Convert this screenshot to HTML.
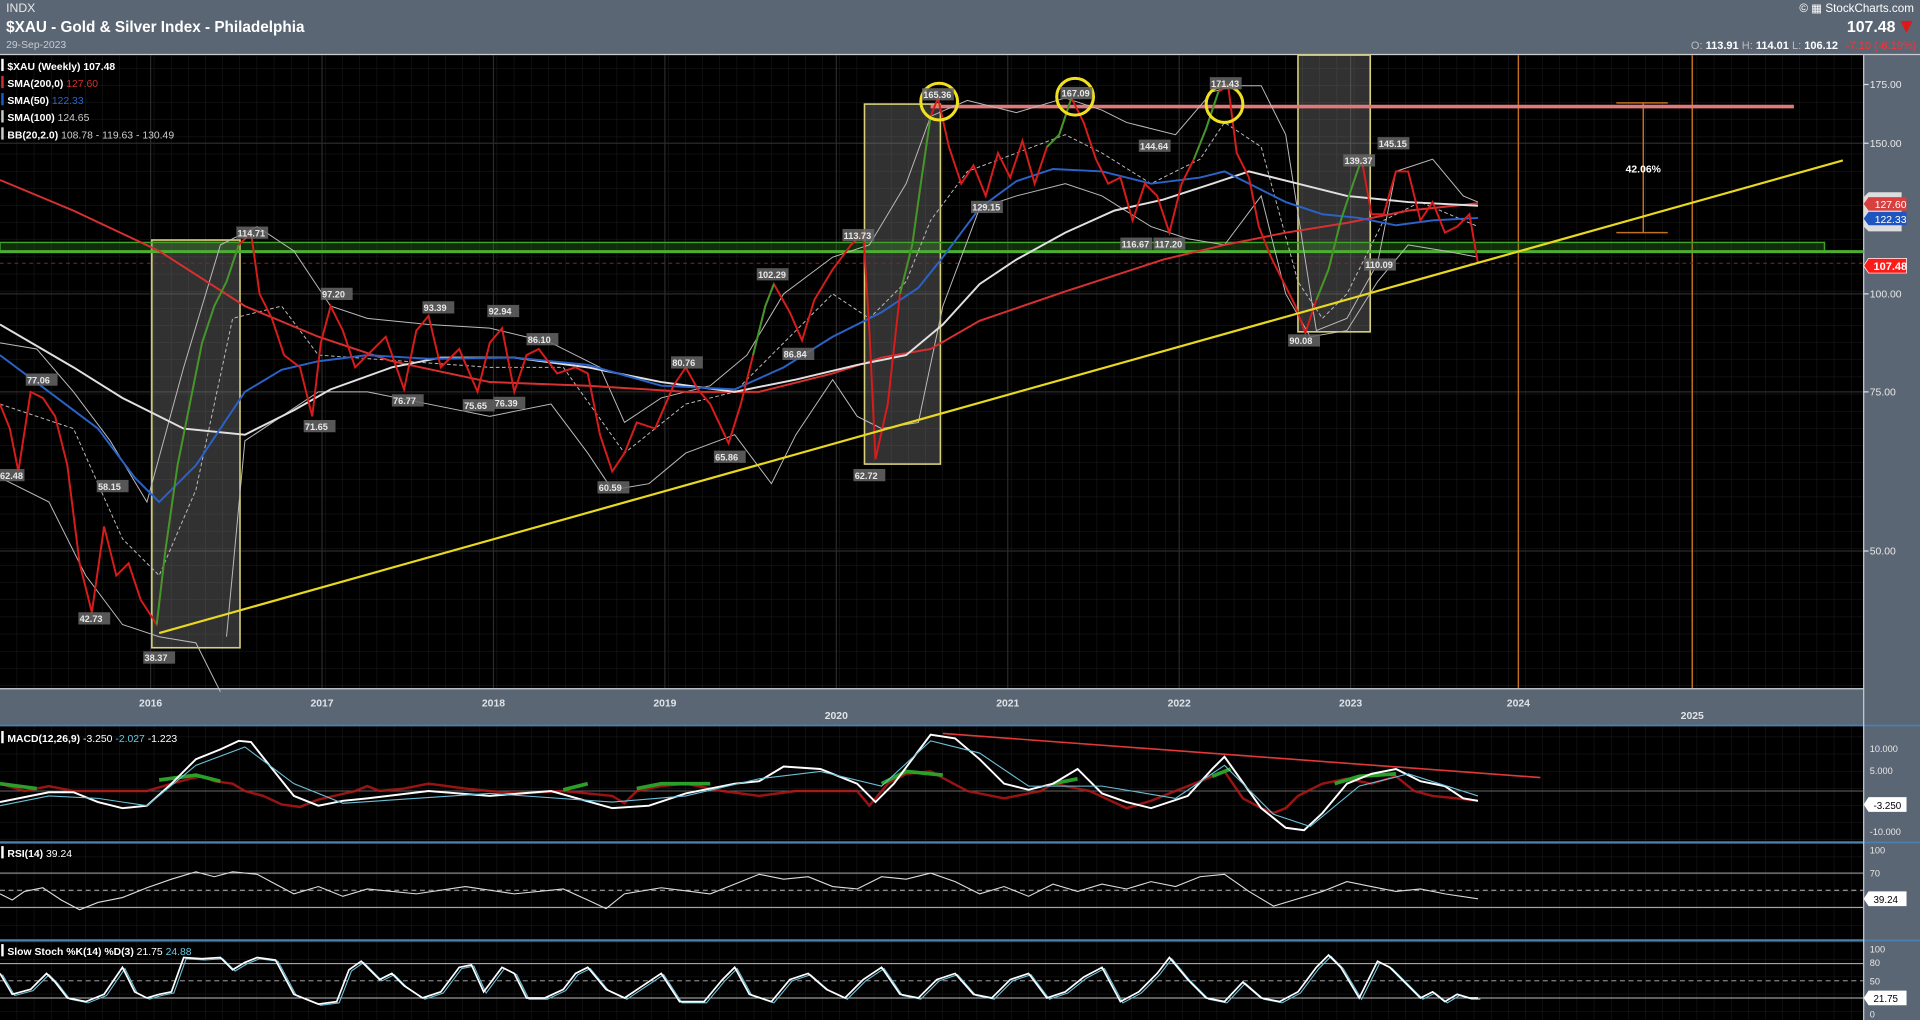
<!DOCTYPE html>
<html><head><meta charset="utf-8"><style>
html,body{margin:0;padding:0;background:#000;width:1920px;height:1020px;overflow:hidden}
svg{display:block}
text{font-family:"Liberation Sans",sans-serif}
</style></head><body>
<svg width="1920" height="1020" viewBox="0 0 1568 833" preserveAspectRatio="none" xmlns="http://www.w3.org/2000/svg">
<defs>
<pattern id="g" width="14" height="14" patternUnits="userSpaceOnUse"><path d="M14 0V14M0 14H14" stroke="#1d1d1d" stroke-width="0.8" fill="none"/></pattern>
</defs>
<rect width="1568" height="833" fill="#5b6675"/>
<rect x="0" y="45" width="1522" height="517" fill="#000"/>
<rect x="0" y="45" width="1522" height="517" fill="url(#g)"/>
<g stroke="#2a2a2a" stroke-width="1"><path d="M123 45V562M263 45V562M403 45V562M543 45V562M683 45V562M823 45V562M963 45V562M1103 45V562M0 117H1522M0 240H1522M0 320H1522M0 450H1522"/></g>
<rect x="0" y="593" width="1522" height="94" fill="#000"/><rect x="0" y="593" width="1522" height="94" fill="url(#g)"/>
<rect x="0" y="689" width="1522" height="78" fill="#000"/><rect x="0" y="689" width="1522" height="78" fill="url(#g)"/>
<rect x="0" y="769" width="1522" height="64" fill="#000"/><rect x="0" y="769" width="1522" height="64" fill="url(#g)"/>
<g stroke="#4a7fb0" stroke-width="1.5"><path d="M0 592.5H1568M0 688H1568M0 768H1568"/></g>
<path d="M0 44.5H1568" stroke="#c8ccd2" stroke-width="1"/>
<path d="M1522 45V833" stroke="#c8ccd2" stroke-width="1"/>
<text x="5" y="10" font-size="10" fill="#e8e8e8">INDX</text>
<text x="5" y="26" font-size="12.5" font-weight="bold" fill="#fff">$XAU - Gold &amp; Silver Index - Philadelphia</text>
<text x="5" y="39" font-size="8.5" fill="#c8ccd2">29-Sep-2023</text>
<text x="1563" y="10" font-size="9.5" fill="#fff" text-anchor="end">© ▦ StockCharts.com</text>
<text x="1548" y="26" font-size="13" font-weight="bold" fill="#fff" text-anchor="end">107.48</text>
<path d="M1552 17L1562 17L1557 27Z" fill="#e01818"/>
<text x="1501" y="40" font-size="9" font-weight="bold" fill="#fff" text-anchor="end"><tspan fill="#bbb" font-weight="normal">O:</tspan> 113.91 <tspan fill="#bbb" font-weight="normal">  H:</tspan> 114.01 <tspan fill="#bbb" font-weight="normal">  L:</tspan> 106.12</text>
<text x="1565" y="40" font-size="9" fill="#ff3030" text-anchor="end">-7.10 (-6.19%)</text>
<g font-size="8.5" font-weight="bold" fill="#fff">
<rect x="1" y="48" width="2" height="10" fill="#fff"/><text x="6" y="57">$XAU (Weekly) 107.48</text>
<rect x="1" y="62" width="2" height="10" fill="#d03030"/><text x="6" y="71">SMA(200,0) <tspan fill="#d03030" font-weight="normal">127.60</tspan></text>
<rect x="1" y="76" width="2" height="10" fill="#1e5ac8"/><text x="6" y="85">SMA(50) <tspan fill="#2a66d0" font-weight="normal">122.33</tspan></text>
<rect x="1" y="90" width="2" height="10" fill="#ccc"/><text x="6" y="99">SMA(100) <tspan fill="#ccc" font-weight="normal">124.65</tspan></text>
<rect x="1" y="104" width="2" height="10" fill="#ccc"/><text x="6" y="113">BB(20,2.0) <tspan fill="#ccc" font-weight="normal">108.78 - 119.63 - 130.49</tspan></text>
</g>
<g fill="rgba(140,140,140,0.35)" stroke="#d8d07a" stroke-width="1.3">
<rect x="124" y="196" width="72" height="333"/>
<rect x="706" y="85" width="62" height="294"/>
<rect x="1060" y="45" width="59" height="226"/>
</g>
<g stroke="#c0701e" stroke-width="1.2"><path d="M1240 45V562M1382 45V562"/>
<path d="M1342 84V190M1320 84H1362M1320 190H1362"/></g>
<text x="1342" y="141" font-size="8.5" font-weight="bold" fill="#fff" text-anchor="middle">42.06%</text>
<rect x="0" y="198" width="1490" height="8" fill="rgba(60,150,40,0.3)" stroke="#3fa02a" stroke-width="1.2"/>
<path d="M0 205.5H1522" stroke="#4caf30" stroke-width="2.5"/>
<path d="M760 87H1465" stroke="#e07a7a" stroke-width="3"/>
<path d="M0 215H1522" stroke="#902020" stroke-width="0.8" stroke-dasharray="3,3"/>
<g fill="none" stroke="#bbb" stroke-width="0.8">
<path d="M0 280L30 285L60 320L90 360L120 410L150 300L180 200L210 185L240 205L270 250L300 260L350 265L400 268L450 280L490 300L510 345L540 325L580 315L610 290L640 240L680 210L710 200L740 150L760 95L790 82L830 92L870 80L900 90L920 100L960 110L990 75L1010 70L1030 70L1050 110L1075 270L1100 260L1125 215L1140 140L1170 130L1195 160L1207 165"/>
<path d="M0 390L40 410L70 470L100 510L130 520L160 525L180 565M185 520L200 360L230 340L260 320L300 320L350 330L400 340L450 330L480 370L500 400L530 395L560 370L600 355L630 395L650 355L680 310L700 340L720 350L750 345L770 250L800 170L830 160L870 150L900 160L940 185L970 195L1000 200L1030 160L1050 240L1070 275L1100 270L1125 230L1150 200L1180 205L1207 210"/>
<path d="M0 330L60 350L100 440L130 470L160 400L190 260L230 250L260 290L330 295L400 300L460 300L510 370L560 330L600 320L640 280L680 240L710 260L740 230L760 180L790 140L830 125L870 110L900 125L940 150L980 130L1000 100L1030 120L1060 230L1080 260L1100 240L1130 180L1160 165L1207 185" stroke-dasharray="3,2"/>
</g>
<path d="M0 147L60 172L130 205L200 250L260 275L320 295L400 312L480 315L560 320L620 320L680 305L720 292L760 285L800 262L870 238L950 212L1000 200L1050 190L1100 182L1150 172L1207 166" fill="none" stroke="#d83030" stroke-width="1.6"/>
<path d="M0 265L60 300L100 325L150 350L200 355L240 335L270 318L320 300L360 292L420 292L480 300L540 312L600 320L650 310L700 298L740 290L770 265L800 232L830 212L870 190L910 172L950 163L990 150L1020 140L1060 150L1100 160L1150 165L1207 168" fill="none" stroke="#e0e0e0" stroke-width="1.6"/>
<path d="M0 290L40 320L80 350L110 390L130 410L160 380L200 320L230 302L260 295L300 290L350 293L420 292L480 298L540 315L600 318L640 300L680 275L720 255L750 235L770 210L800 170L830 148L860 138L900 140L940 150L980 145L1000 140L1020 150L1050 165L1080 175L1110 178L1140 184L1170 180L1207 178" fill="none" stroke="#2a62c8" stroke-width="1.6"/>
<path d="M0 330L8 350L15 385L25 320L35 325L45 340L55 380L65 460L75 500L85 430L95 470L105 460L115 490L128 510L135 450L145 380L155 330L165 280L175 250L185 230L195 200L205 190L212 240L222 260L232 290L245 300L255 340L262 280L270 250L280 270L290 300L300 290L315 275L330 318L340 270L350 258L360 300L375 285L390 320L400 280L410 268L420 320L430 290L440 285L455 305L470 300L480 305L490 355L500 385L510 370L520 345L535 350L550 315L560 300L570 318L580 330L595 362L605 330L615 290L625 250L632 232L645 255L655 278L665 245L680 220L695 200L705 190L710 270L715 375L725 330L735 240L745 200L752 150L760 95L766 80L775 120L785 150L795 135L805 160L815 125L825 145L835 115L845 150L855 120L865 110L875 80L885 100L895 130L905 150L915 145L925 180L935 150L945 160L955 190L965 150L975 130L985 105L995 75L1003 70L1010 125L1020 145L1028 185L1038 210L1048 230L1058 250L1066 272L1075 245L1085 220L1095 180L1105 150L1112 130L1120 175L1130 175L1140 140L1150 140L1160 180L1170 165L1180 190L1190 185L1200 175L1207 215" fill="none" stroke="#d81c1c" stroke-width="1.6"/>
<path d="M128 510L135 450L145 380L155 330L165 280L175 250L185 230L195 200M615 290L625 250L632 232M735 240L745 200L752 150L760 95M855 120L865 110L875 80M975 130L985 105L995 75M1075 245L1085 220L1095 180L1105 150L1112 130" fill="none" stroke="#3a9a2a" stroke-width="1.6"/>
<path d="M130 517L1505 131" stroke="#e8d820" stroke-width="1.8"/>
<g fill="none" stroke="#f0e020" stroke-width="2.5"><circle cx="767" cy="83" r="15"/><circle cx="878" cy="79" r="15"/><circle cx="1000" cy="85" r="15"/></g>
<g font-size="7.5" font-weight="bold" fill="#e8e8e8">
<g fill="#666" opacity="0.85"><rect x="193" y="185" width="26" height="10"/><rect x="0" y="383" width="20" height="10"/><rect x="21" y="305" width="26" height="10"/><rect x="79" y="392" width="26" height="10"/><rect x="64" y="500" width="26" height="10"/><rect x="117" y="532" width="26" height="10"/><rect x="248" y="343" width="26" height="10"/><rect x="262" y="235" width="26" height="10"/><rect x="320" y="322" width="26" height="10"/><rect x="345" y="246" width="26" height="10"/><rect x="378" y="326" width="26" height="10"/><rect x="398" y="249" width="26" height="10"/><rect x="403" y="324" width="26" height="10"/><rect x="430" y="272" width="26" height="10"/><rect x="488" y="393" width="26" height="10"/><rect x="548" y="291" width="26" height="10"/><rect x="583" y="368" width="26" height="10"/><rect x="618" y="219" width="26" height="10"/><rect x="639" y="284" width="26" height="10"/><rect x="688" y="187" width="26" height="10"/><rect x="697" y="383" width="26" height="10"/><rect x="753" y="72" width="26" height="10"/><rect x="866" y="71" width="26" height="10"/><rect x="988" y="63" width="26" height="10"/><rect x="793" y="164" width="26" height="10"/><rect x="930" y="114" width="26" height="10"/><rect x="915" y="194" width="26" height="10"/><rect x="942" y="194" width="26" height="10"/><rect x="1052" y="273" width="26" height="10"/><rect x="1097" y="126" width="26" height="10"/><rect x="1125" y="112" width="26" height="10"/><rect x="1114" y="211" width="26" height="10"/></g>
<text x="194" y="193">114.71</text><text x="0" y="391">62.48</text><text x="22" y="313">77.06</text><text x="80" y="400">58.15</text><text x="65" y="508">42.73</text><text x="118" y="540">38.37</text><text x="249" y="351">71.65</text><text x="263" y="243">97.20</text><text x="321" y="330">76.77</text><text x="346" y="254">93.39</text><text x="379" y="334">75.65</text><text x="399" y="257">92.94</text><text x="404" y="332">76.39</text><text x="431" y="280">86.10</text><text x="489" y="401">60.59</text><text x="549" y="299">80.76</text><text x="584" y="376">65.86</text><text x="619" y="227">102.29</text><text x="640" y="292">86.84</text><text x="689" y="195">113.73</text><text x="698" y="391">62.72</text><text x="754" y="80">165.36</text><text x="867" y="79">167.09</text><text x="989" y="71">171.43</text><text x="794" y="172">129.15</text><text x="931" y="122">144.64</text><text x="916" y="202">116.67</text><text x="943" y="202">117.20</text><text x="1053" y="281">90.08</text><text x="1098" y="134">139.37</text><text x="1126" y="120">145.15</text><text x="1115" y="219">110.09</text>
</g>
<g font-size="8.5" fill="#e8e8e8"><text x="1527" y="72">175.00</text><text x="1527" y="120">150.00</text><text x="1527" y="243">100.00</text><text x="1527" y="323">75.00</text><text x="1527" y="453">50.00</text></g>
<g stroke="#ddd"><path d="M1522 69H1526M1522 117H1526M1522 240H1526M1522 320H1526M1522 450H1526"/></g>
<path d="M1526 157H1553V189H1526L1522 185V161Z" fill="#ddd"/>
<path d="M1526 161H1557V172H1526L1522 166.5Z" fill="#d84040"/><text x="1531" y="170" font-size="8.5" fill="#fff">127.60</text>
<path d="M1526 173H1557V184H1526L1522 178.5Z" fill="#1e55c0"/><text x="1531" y="182" font-size="8.5" fill="#fff">122.33</text>
<path d="M1526 211H1557V223H1526L1522 217Z" fill="#ff1a1a" stroke="#fff" stroke-width="0.6"/><text x="1530" y="220.5" font-size="9" font-weight="bold" fill="#fff">107.48</text>
<path d="M0 562.5H1522" stroke="#c8ccd2"/>
<g font-size="8.5" font-weight="bold" fill="#e0e4e8" text-anchor="middle"><text x="123" y="577">2016</text><text x="263" y="577">2017</text><text x="403" y="577">2018</text><text x="543" y="577">2019</text><text x="683" y="587">2020</text><text x="823" y="577">2021</text><text x="963" y="577">2022</text><text x="1103" y="577">2023</text><text x="1240" y="577">2024</text><text x="1382" y="587">2025</text></g>
<g font-size="8.5" fill="#fff"><rect x="1" y="597" width="2" height="10"/><text x="6" y="606" font-weight="bold">MACD(12,26,9) <tspan font-weight="normal">-3.250</tspan> <tspan fill="#6ac8e0" font-weight="normal">-2.027</tspan> <tspan font-weight="normal">-1.223</tspan></text></g>
<path d="M0 646H1522" stroke="#888" stroke-width="0.6"/>
<path d="M0 640L20 646L40 642L60 646L80 646L100 646L120 646L140 640L155 636L165 634L175 638L190 640L200 646L215 650L230 657L245 659L260 653L290 646L300 642L310 646L330 644L350 640L380 644L420 648L460 646L500 650L510 656L520 646L540 642L560 640L590 646L620 650L650 646L700 646L710 658L725 640L740 632L760 630L790 646L820 652L850 646L860 640L890 646L920 660L940 654L960 646L990 634L1000 630L1015 652L1030 660L1040 664L1050 660L1060 650L1080 640L1100 636L1120 640L1140 634L1155 646L1170 650L1190 652L1207 654" fill="none" stroke="#c01818" stroke-width="2" opacity="0.8"/>
<path d="M0 640L30 644M130 637L160 633L180 638M460 645L480 640M520 644L540 640L580 640M720 640L740 630L770 633M860 640L880 636M990 634L1005 628M1090 640L1110 634L1140 632" fill="none" stroke="#2aa02a" stroke-width="3"/>
<path d="M0 655L20 651L40 647L60 647L80 655L100 660L120 658L140 640L160 620L180 612L195 605L205 606L220 625L240 650L260 658L280 654L300 652L350 646L400 650L450 646L500 660L530 658L560 648L600 640L620 638L640 626L670 628L700 640L715 655L730 640L760 600L780 603L800 620L820 640L840 645L860 640L880 628L900 648L920 655L940 660L970 650L990 628L1000 618L1010 632L1030 660L1050 676L1065 678L1080 664L1100 640L1120 632L1140 628L1160 638L1180 642L1195 652L1207 654" fill="none" stroke="#fff" stroke-width="1.6"/>
<path d="M0 658L40 650L80 652L120 658L160 625L200 610L240 640L280 656L400 648L500 655L560 650L620 636L670 630L720 642L760 605L800 615L840 642L900 642L960 652L1000 625L1040 665L1070 675L1110 642L1150 632L1207 650" fill="none" stroke="#6ac0d8" stroke-width="0.9"/>
<path d="M770 599L1258 635" stroke="#e03838" stroke-width="1.3"/>
<g font-size="7.5" fill="#e8e8e8"><text x="1527" y="614">10.000</text><text x="1527" y="632">5.000</text><text x="1527" y="682">-10.000</text></g>
<path d="M1526 651H1557V663H1526L1522 657Z" fill="#fff"/><text x="1530" y="660.5" font-size="8" fill="#000">-3.250</text>
<g font-size="8.5" fill="#fff"><rect x="1" y="691" width="2" height="10"/><text x="6" y="700" font-weight="bold">RSI(14) <tspan font-weight="normal">39.24</tspan></text></g>
<g stroke="#bbb" stroke-width="0.8"><path d="M0 713H1522M0 741H1522"/><path d="M0 727H1522" stroke-dasharray="4,3"/></g>
<path d="M0 730L10 735L20 728L35 725L50 735L65 743L80 737L100 733L120 725L140 718L160 712L175 716L190 712L210 714L225 722L240 730L260 724L280 732L300 726L340 730L380 724L420 730L460 726L480 735L495 742L510 730L540 725L580 730L600 722L620 714L640 718L660 716L680 724L700 726L720 716L740 718L760 713L780 720L800 730L820 724L840 732L860 722L880 728L900 722L920 726L940 720L960 724L980 716L1000 714L1020 728L1040 740L1060 734L1080 728L1100 720L1120 724L1140 728L1160 726L1180 730L1207 734" fill="none" stroke="#ddd" stroke-width="0.9"/>
<g font-size="7.5" fill="#e8e8e8"><text x="1527" y="697">100</text><text x="1527" y="716">70</text></g>
<path d="M1526 728H1557V740H1526L1522 734Z" fill="#fff"/><text x="1530" y="737.5" font-size="8" fill="#000">39.24</text>
<g font-size="8.5" fill="#fff"><rect x="1" y="771" width="2" height="10"/><text x="6" y="780" font-weight="bold">Slow Stoch %K(14) %D(3) <tspan font-weight="normal">21.75</tspan> <tspan fill="#6ac8e0" font-weight="normal">24.88</tspan></text></g>
<g stroke="#bbb" stroke-width="0.8"><path d="M0 787H1522M0 815H1522"/><path d="M0 801H1522" stroke-dasharray="4,3"/></g>
<path id="st" d="M0 795L10 812L25 808L38 795L45 802L55 815L70 818L85 812L100 790L110 810L120 815L130 812L140 810L150 782L165 783L180 782L190 792L200 786L210 782L225 784L240 812L260 820L275 818L285 792L295 785L310 800L320 795L330 805L345 815L360 810L375 790L385 788L395 810L410 790L420 795L430 815L445 815L460 808L470 795L480 790L495 808L510 815L525 805L540 795L555 818L575 818L590 800L600 790L612 812L630 818L645 800L660 795L675 808L690 815L705 800L720 790L735 812L750 815L765 800L780 795L795 812L810 815L825 800L840 795L855 815L870 810L885 798L900 790L915 818L930 810L945 795L955 782L970 800L985 815L1000 818L1015 802L1030 815L1045 818L1060 810L1075 790L1085 780L1095 790L1110 815L1125 785L1135 790L1145 800L1160 815L1170 810L1180 818L1190 812L1200 815L1207 815" fill="none" stroke="#6ac0d8" stroke-width="0.9" transform="translate(2,1)"/>
<path d="M0 795L10 812L25 808L38 795L45 802L55 815L70 818L85 812L100 790L110 810L120 815L130 812L140 810L150 782L165 783L180 782L190 792L200 786L210 782L225 784L240 812L260 820L275 818L285 792L295 785L310 800L320 795L330 805L345 815L360 810L375 790L385 788L395 810L410 790L420 795L430 815L445 815L460 808L470 795L480 790L495 808L510 815L525 805L540 795L555 818L575 818L590 800L600 790L612 812L630 818L645 800L660 795L675 808L690 815L705 800L720 790L735 812L750 815L765 800L780 795L795 812L810 815L825 800L840 795L855 815L870 810L885 798L900 790L915 818L930 810L945 795L955 782L970 800L985 815L1000 818L1015 802L1030 815L1045 818L1060 810L1075 790L1085 780L1095 790L1110 815L1125 785L1135 790L1145 800L1160 815L1170 810L1180 818L1190 812L1200 815L1207 815" fill="none" stroke="#fff" stroke-width="1.4"/>
<g font-size="7.5" fill="#e8e8e8"><text x="1527" y="778">100</text><text x="1527" y="789">80</text><text x="1527" y="804">50</text><text x="1527" y="831">0</text></g>
<path d="M1526 809H1557V821H1526L1522 815Z" fill="#fff"/><text x="1530" y="818.5" font-size="8" fill="#000">21.75</text>
</svg>
</body></html>
